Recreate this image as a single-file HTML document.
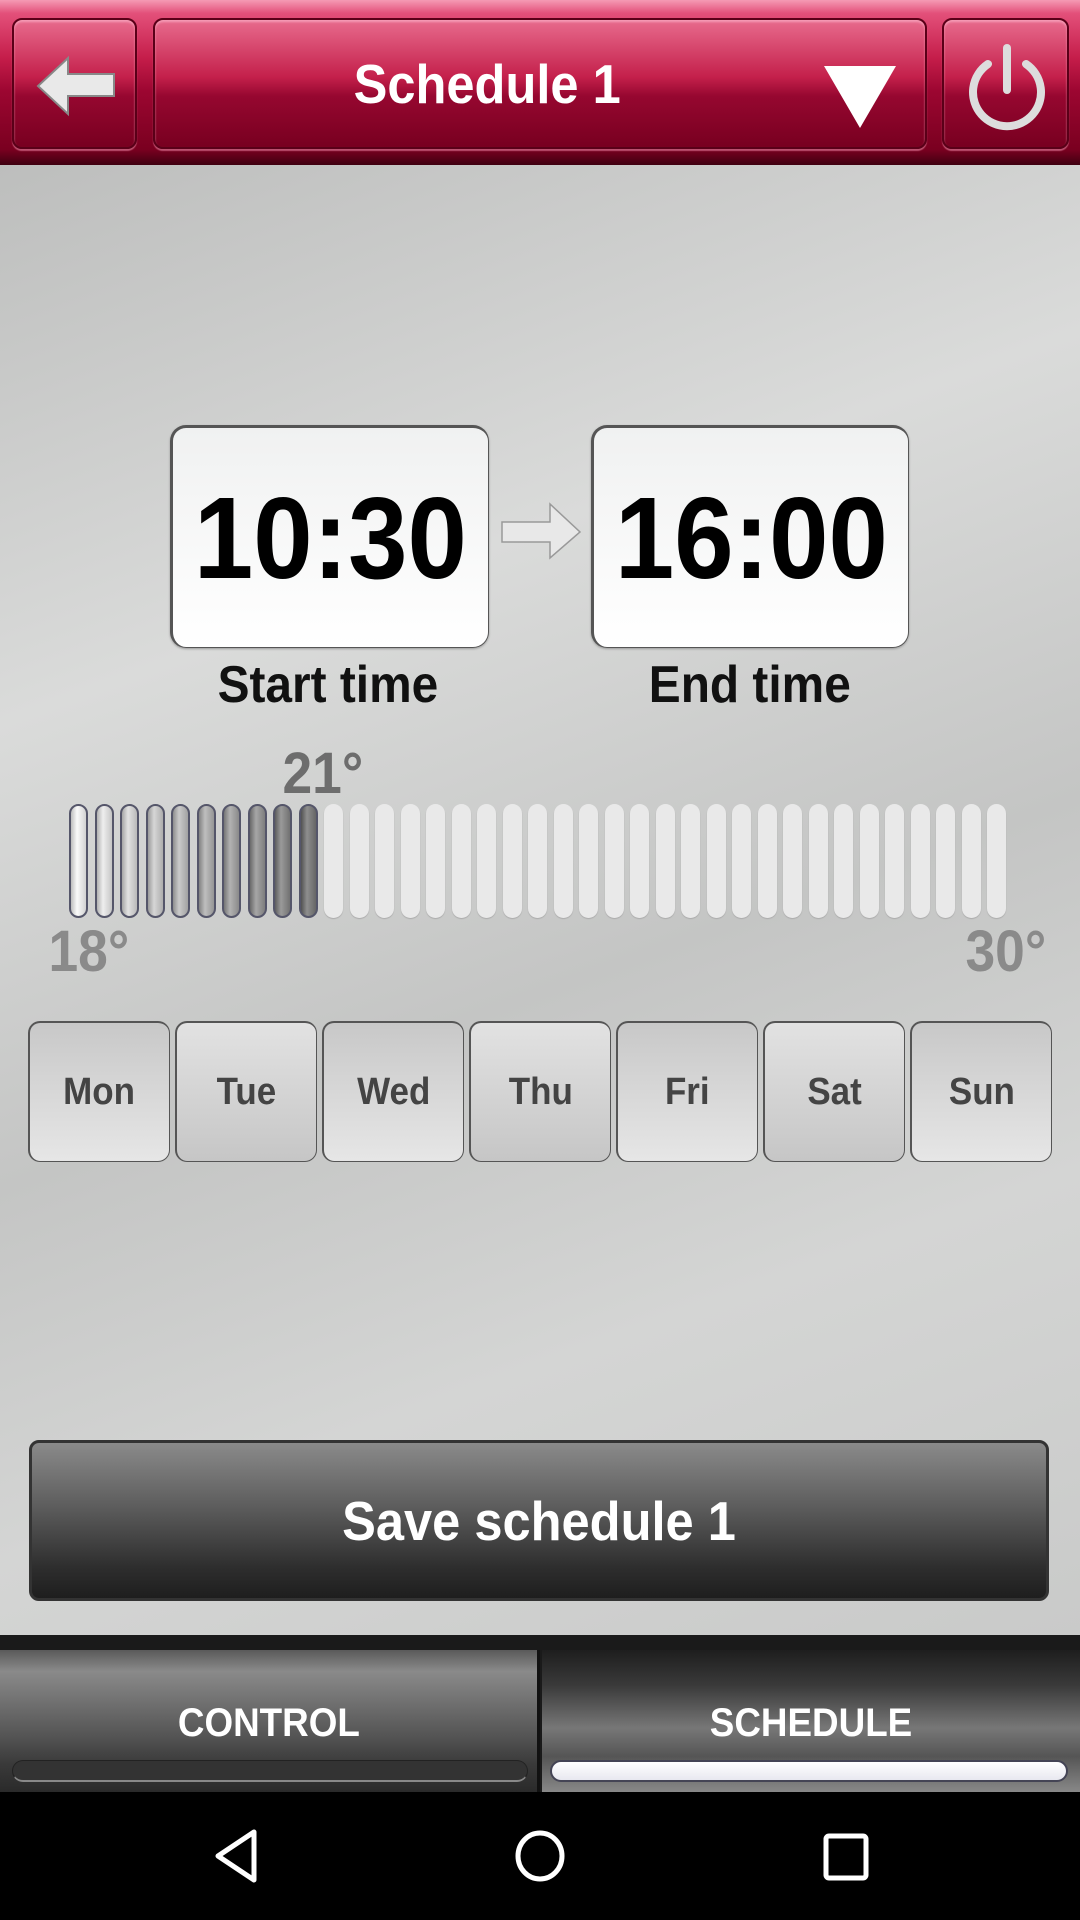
<!DOCTYPE html>
<html><head><meta charset="utf-8"><style>
*{margin:0;padding:0;box-sizing:border-box}
body{width:1080px;height:1920px;overflow:hidden;position:relative;font-family:"Liberation Sans",sans-serif;font-weight:bold;background:#c8c9c8}
.abs{position:absolute}
.main{left:0;top:165px;width:1080px;height:1470px;background:linear-gradient(160deg,#bdbebd 0%,#dadbda 30%,#c4c5c4 55%,#d4d5d4 75%,#c9cac9 100%)}
.top{left:0;top:0;width:1080px;height:166px;background:linear-gradient(#f59ab4 0,#e3507a 8%,#c51d4a 35%,#9c0631 55%,#7a0020 90%,#3b0010 100%)}
.rb{border:2px solid #5a0018;border-radius:10px;box-shadow:inset 0 2px 2px rgba(255,190,210,.6),0 2px 1px rgba(255,160,190,.5);background:linear-gradient(#e86b8d,#c4204b 45%,#960730 60%,#780020)}
.c{display:flex;align-items:center;justify-content:center;text-align:center}
.cond{display:inline-block;transform:scaleX(.92)}
.tb{background:linear-gradient(#f0f1f1,#fff);border-radius:16px;border:3px solid #555;border-width:3px 1px 1px 3px;box-shadow:0 1px 2px #999;font-size:116px;color:#000}
.bar{position:absolute;top:804px;width:19px;height:114px;border-radius:10px}
.day{position:absolute;top:1021px;width:142px;height:141px;border-radius:12px;font-size:38px;color:#444;border:2px solid #555;border-width:2px 1px 1px 2px}
.tab{top:1650px;height:142px;width:540px;color:#fff;font-size:40px}
</style></head><body>
<div class="abs top"></div>
<div class="abs rb" style="left:12px;top:18px;width:125px;height:131px">
<svg class="abs" style="left:18px;top:30px" width="90" height="70" viewBox="0 0 90 70"><path d="M6 36 L36 8 L36 24 L82 24 L82 46 L36 46 L36 64 Z" fill="#e9e9e9" stroke="#888" stroke-width="2"/></svg></div>
<div class="abs rb c" style="left:153px;top:18px;width:774px;height:131px;color:#fff;font-size:55px"><span class="cond" style="margin-right:106px">Schedule 1</span>
<svg class="abs" style="left:665px;top:42px" width="80" height="70"><path d="M4 4 L76 4 L40 66 Z" fill="#fff"/></svg></div>
<div class="abs rb" style="left:942px;top:18px;width:127px;height:131px">
<svg class="abs" style="left:18px;top:14px" width="90" height="100" viewBox="0 0 90 100"><path d="M26 30 A34 34 0 1 0 64 30" fill="none" stroke="#ddd" stroke-width="8" stroke-linecap="round"/><line x1="45" y1="14" x2="45" y2="56" stroke="#ddd" stroke-width="8" stroke-linecap="round"/></svg></div>
<div class="abs main"></div>
<div class="abs tb c" style="left:170px;top:425px;width:319px;height:223px"><span class="cond">10:30</span></div>
<div class="abs tb c" style="left:591px;top:425px;width:318px;height:223px"><span class="cond">16:00</span></div>
<svg class="abs" style="left:500px;top:500px" width="82" height="60"><path d="M2 22 L50 22 L50 4 L80 32 L50 58 L50 42 L2 42 Z" fill="#e8e8e8" stroke="#999" stroke-width="1.5"/></svg>
<div class="abs c" style="left:168px;top:655px;width:320px;height:60px;font-size:52px;color:#111"><span class="cond">Start time</span></div>
<div class="abs c" style="left:590px;top:655px;width:320px;height:60px;font-size:52px;color:#111"><span class="cond">End time</span></div>
<div class="abs" style="left:279px;top:740px;font-size:58px;color:#6d6d6d"><span class="cond">21°</span></div>
<div class="abs" style="left:45px;top:918px;font-size:58px;color:#8a8a8a"><span class="cond">18°</span></div>
<div class="abs" style="left:962px;top:918px;font-size:58px;color:#8a8a8a"><span class="cond">30°</span></div>
<div id="bars"></div>
<div id="days"></div>
<script>
var h='';for(var i=0;i<37;i++){var x=69+i*25.5;if(i<10){var g=250-i*12;var d=g-60;h+='<div class="bar" style="left:'+x+'px;background:linear-gradient(90deg,rgb('+d+','+d+','+d+'),rgb('+g+','+g+','+g+') 40%,rgb('+(d+20)+','+(d+20)+','+(d+20)+'));border:2px solid #55566a"></div>';}else{h+='<div class="bar" style="left:'+x+'px;background:#e9e9e9;box-shadow:0 1px 1px #aaa"></div>';}}
document.getElementById('bars').innerHTML=h;
var dd=['Mon','Tue','Wed','Thu','Fri','Sat','Sun'],s='';for(var j=0;j<7;j++){var bg=j%2?'linear-gradient(#e2e2e2,#c6c6c6)':'linear-gradient(#c8c8c8,#e6e6e6)';s+='<div class="day c" style="left:'+(28+j*147)+'px;background:'+bg+'"><span class="cond">'+dd[j]+'</span></div>';}
document.getElementById('days').innerHTML=s;
</script>
<div class="abs c" style="left:29px;top:1440px;width:1020px;height:161px;border-radius:10px;border:3px solid #333;background:linear-gradient(#8a8a8a,#5e5e5e 40%,#2e2e2e 80%,#1e1e1e);color:#fff;font-size:55px"><span class="cond">Save schedule 1</span></div>
<div class="abs" style="left:0;top:1635px;width:1080px;height:157px;background:#1a1a1a"></div>
<div class="abs tab c" style="left:0;background:linear-gradient(#5a5a5a,#8a8a8a 15%,#555 60%,#3a3a3a 80%,#2a2a2a);border-right:3px solid #111;padding-top:4px"><span class="cond">CONTROL</span>
<div class="abs" style="left:12px;top:110px;width:516px;height:22px;border-radius:11px;background:#333;border:1px solid #222;border-bottom:2px solid #888"></div></div>
<div class="abs tab c" style="left:542px;width:538px;background:linear-gradient(#1e1e1e,#3a3a3a 25%,#777 55%,#555 75%,#888);padding-top:4px"><span class="cond">SCHEDULE</span>
<div class="abs" style="left:8px;top:110px;width:518px;height:22px;border-radius:11px;background:linear-gradient(#fff,#e8e8f0);border:2px solid #445"></div></div>
<div class="abs" style="left:0;top:1792px;width:1080px;height:128px;background:#000"></div>
<svg class="abs" style="left:0;top:1792px" width="1080" height="128">
<path d="M254 40 L254 88 L218 64 Z" fill="none" stroke="#fff" stroke-width="5" stroke-linejoin="round"/>
<ellipse cx="540" cy="64" rx="22" ry="23" fill="none" stroke="#fff" stroke-width="5"/>
<rect x="826" y="44" width="40" height="42" rx="3" fill="none" stroke="#fff" stroke-width="5"/>
</svg>
</body></html>
